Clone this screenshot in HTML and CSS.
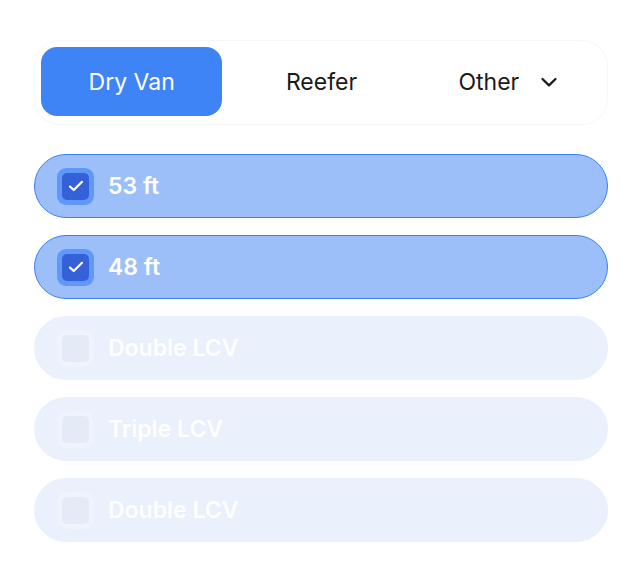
FILE: index.html
```html
<!DOCTYPE html>
<html lang="en">
<head>
  <meta charset="UTF-8">
  <meta name="viewport" content="width=device-width, initial-scale=1.0">
  <title>Trailer type</title>
  <link rel="stylesheet" href="styles.css">
</head>
<body>
  <div class="panel">
    <!-- Trailer tabs -->
    <div class="tabs">
      <button class="tab tab-active">Dry Van</button>
      <button class="tab tab-reefer">Reefer</button>
      <button class="tab tab-other">Other
        <svg class="chevron" width="18" height="18" viewBox="0 0 18 18"><path d="M2.5 6 L9 12.3 L15.5 6" fill="none" stroke="#1a1a1a" stroke-width="2.3" stroke-linecap="round" stroke-linejoin="round"/></svg>
      </button>
    </div>

    <!-- Length options -->
    <ul class="options">
      <li class="option checked">
        <span class="box"><span class="box-inner"><svg width="16" height="16" viewBox="0 0 16 16"><path d="M2 8.6 L5.8 12 L14 3.8" fill="none" stroke="#fff" stroke-width="2.2" stroke-linecap="round" stroke-linejoin="round"/></svg></span></span>
        <span class="label">53 ft</span>
      </li>
      <li class="option checked">
        <span class="box"><span class="box-inner"><svg width="16" height="16" viewBox="0 0 16 16"><path d="M2 8.6 L5.8 12 L14 3.8" fill="none" stroke="#fff" stroke-width="2.2" stroke-linecap="round" stroke-linejoin="round"/></svg></span></span>
        <span class="label">48 ft</span>
      </li>
      <li class="option">
        <span class="box"><span class="box-inner"></span></span>
        <span class="label">Double LCV</span>
      </li>
      <li class="option">
        <span class="box"><span class="box-inner"></span></span>
        <span class="label">Triple LCV</span>
      </li>
      <li class="option">
        <span class="box"><span class="box-inner"></span></span>
        <span class="label">Double LCV</span>
      </li>
    </ul>
  </div>
</body>
</html>
```

FILE: styles.css
```css
body {
  font-family: Inter, "Noto Sans", sans-serif;
  background-color: #ffffff;
  margin: 0;
  padding: 0;
}

.panel {
  width: 574px;
  padding: 40px 0 0 34px;
}

/* Tabs */
.tabs {
  display: grid;
  grid-template-columns: repeat(3, 1fr);
  gap: 8px;
  padding: 6px 6px 8px;
  background-color: #ffffff;
  border: 1px solid #f6f7f9;
  border-radius: 26px;
  box-sizing: border-box;
}

.tab {
  height: 69px;
  border: none;
  background: none;
  font-family: inherit;
  font-size: 23px;
  color: #1a1a1a;
  border-radius: 16px;
  display: flex;
  align-items: center;
  justify-content: center;
  cursor: pointer;
}

.tab-active {
  background-color: #3e84f7;
  color: #ffffff;
}

.tab-reefer {
  padding-left: 7px;
}

.tab-other {
  gap: 21px;
  padding-left: 2px;
}

.chevron {
  margin-top: 1px;
}

/* Options */
.options {
  list-style: none;
  margin: 29px 0 0;
  padding: 0;
  display: flex;
  flex-direction: column;
  gap: 17px;
}

.option {
  height: 64px;
  border-radius: 32px;
  background-color: #eaf0fc;
  border: 1px solid #eaf0fc;
  box-sizing: border-box;
  display: flex;
  align-items: center;
  padding-left: 22px;
}

.option.checked {
  background-color: #9cbff9;
  border-color: #3b7ff5;
}

.box {
  width: 37px;
  height: 37px;
  border-radius: 9px;
  background-color: #eef3fc;
  display: flex;
  align-items: center;
  justify-content: center;
}

.box-inner {
  width: 27px;
  height: 27px;
  border-radius: 5px;
  background-color: #e4ebf7;
  display: flex;
  align-items: center;
  justify-content: center;
}

.option.checked .box {
  background-color: #5f98f9;
}

.option.checked .box-inner {
  background-color: #3561d8;
}

.label {
  margin-left: 14px;
  font-size: 23px;
  font-weight: 600;
  color: #ffffff;
}
```
